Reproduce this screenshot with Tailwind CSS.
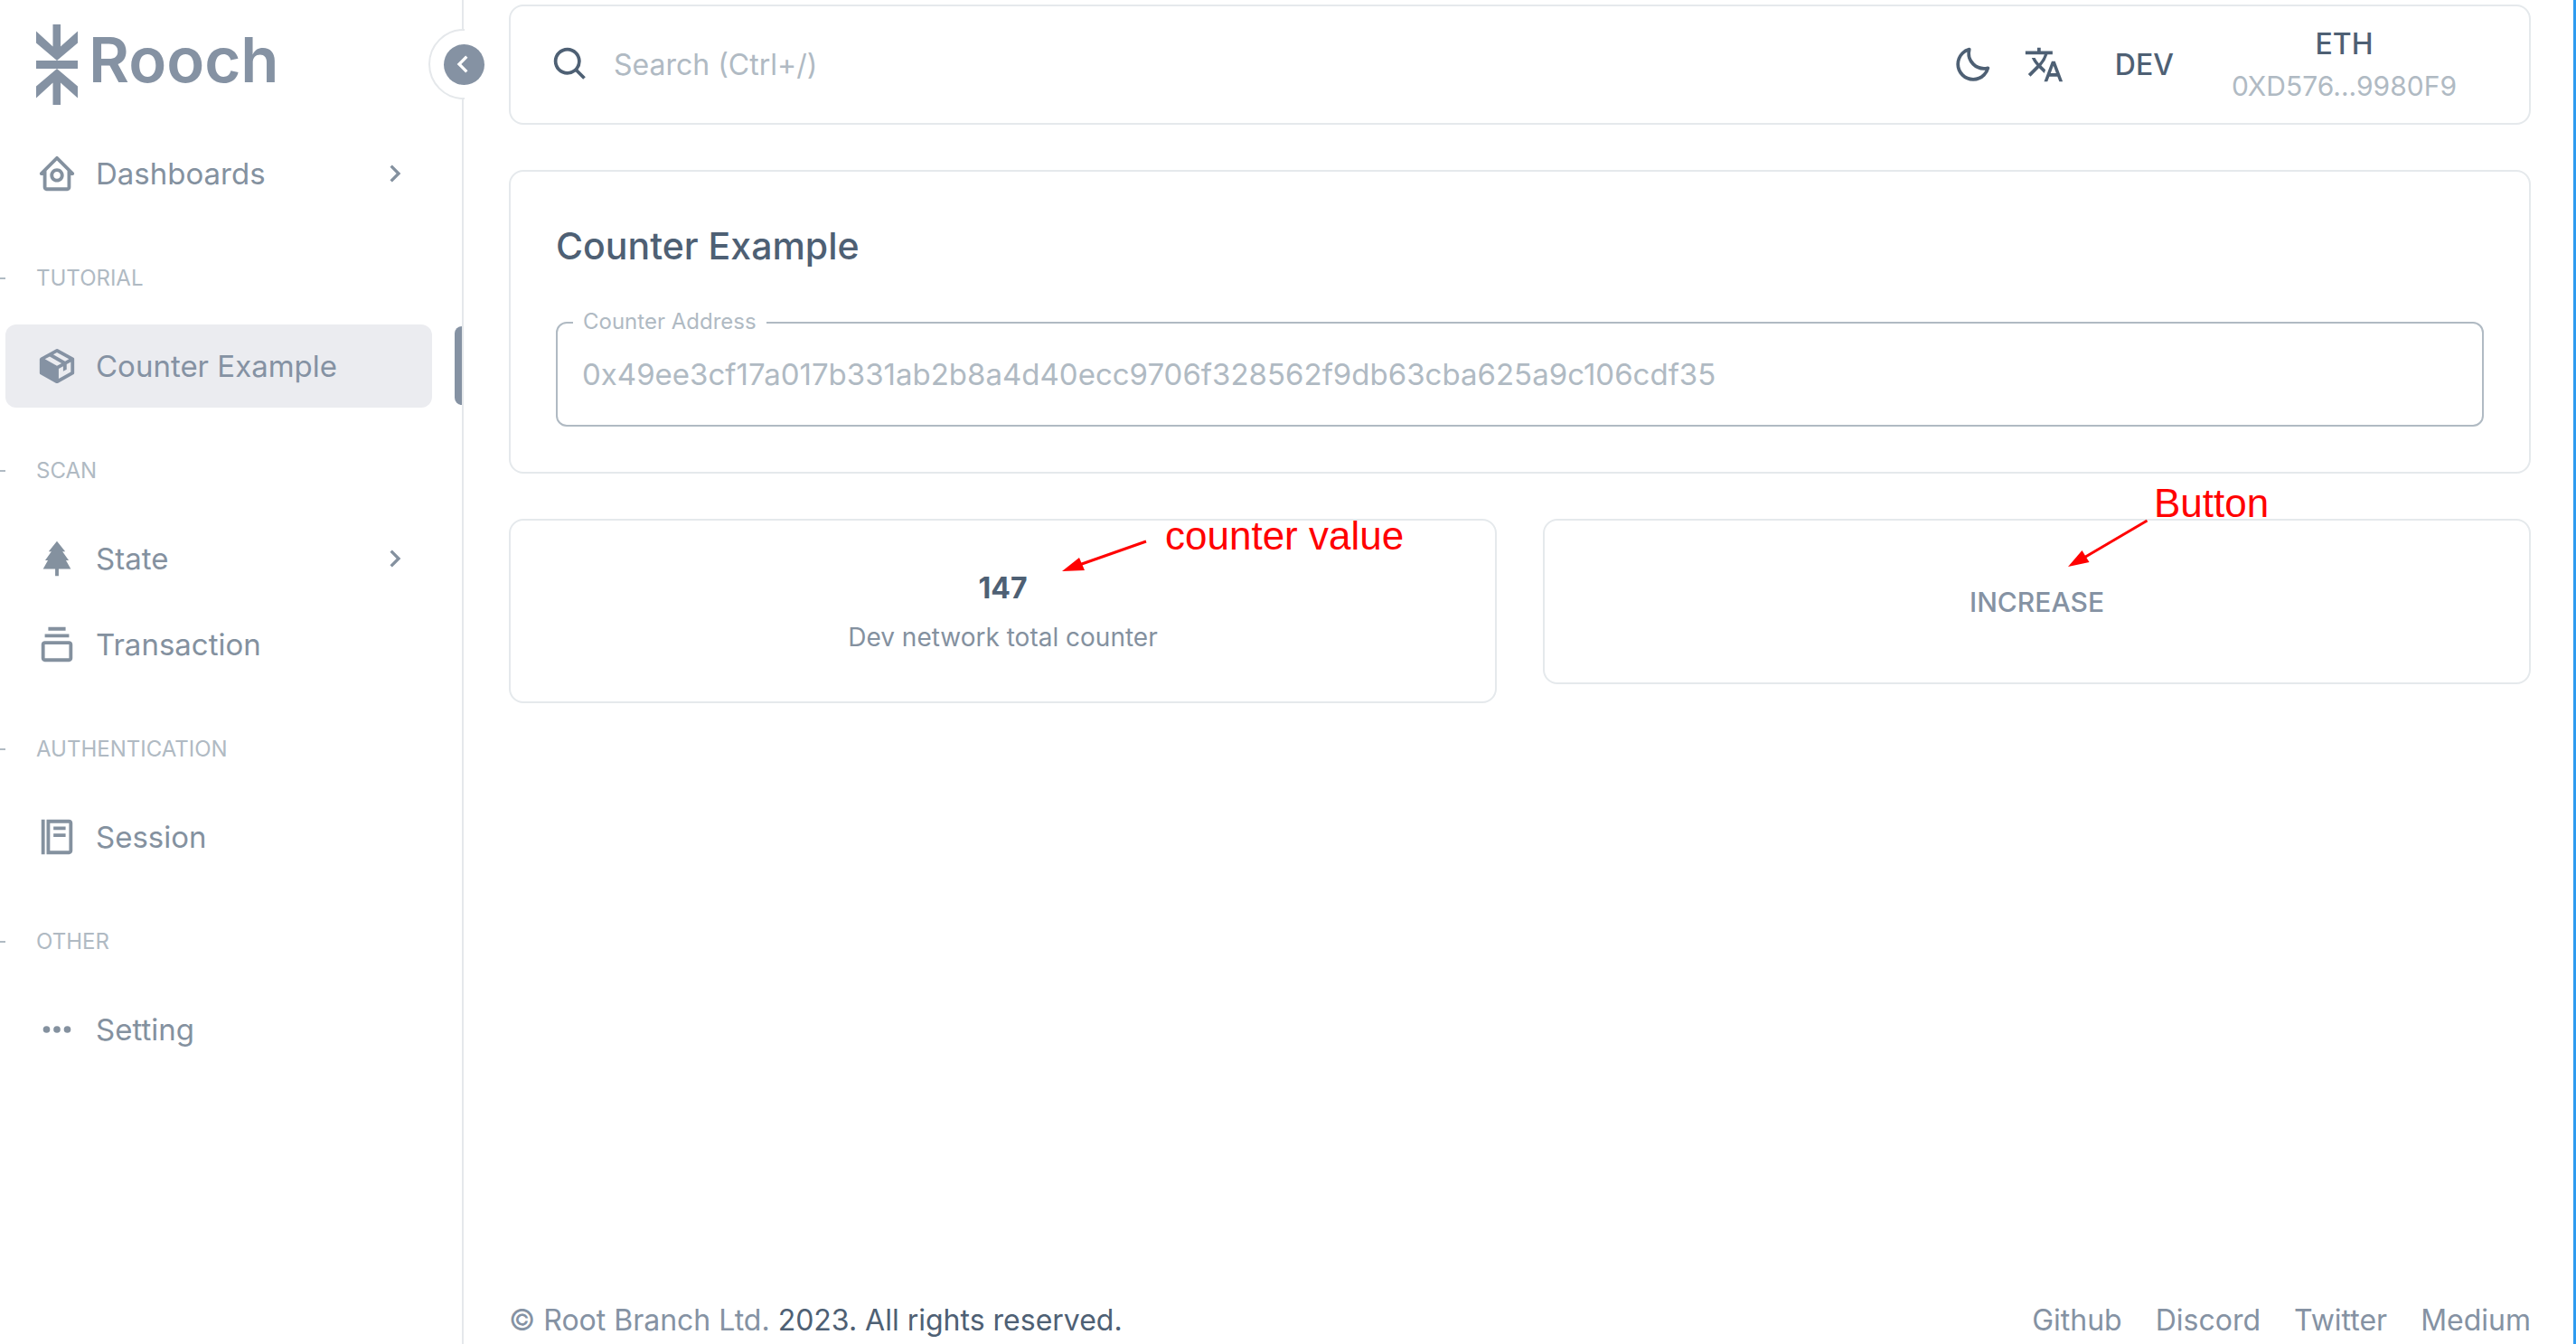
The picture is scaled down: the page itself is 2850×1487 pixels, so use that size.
<!DOCTYPE html>
<html lang="en">
<head>
<meta charset="utf-8">
<meta name="viewport" content="width=device-width, initial-scale=1">
<title>Rooch - Counter Example</title>
<script src="https://cdn.jsdelivr.net/npm/@tailwindcss/browser@4"></script>
</head>
<body class="flex min-h-screen border-r-3 border-[#2e9bf0] bg-white font-['Inter',sans-serif] text-[32px] leading-[52px] text-[#84919f]">

<!-- Sidebar -->
<aside class="relative w-[513px] shrink-0 border-r-2 border-[#e5e8eb]">
  <a href="#" class="flex h-[146px] items-start gap-3 pl-10 pt-[27px] text-[#8592a3]">
    <svg class="h-[89px] w-[46px]" viewBox="0 0 46 89" fill="currentColor" aria-hidden="true">
      <path d="M18.500 0H27V24.500L46 7.500V20.500L23 40L0 20.500V7.500L18.500 24.500Z"/>
      <path d="M0 40H46V49H0Z"/>
      <path d="M18.500 89H27V64.500L46 81.500V68.500L23 49L0 68.500V81.500L18.500 64.500Z"/>
    </svg>
    <span class="text-[69px] font-semibold leading-[78px]">Rooch</span>
  </a>

  <button type="button" aria-label="Collapse sidebar" class="absolute top-8 -right-[41px] flex h-[78px] w-[78px] items-center justify-center rounded-full bg-white">
    <svg class="absolute inset-0 h-[78px] w-[78px]" viewBox="0 0 78 78" fill="none" stroke="#e5e8eb" stroke-width="2" aria-hidden="true"><path d="M40 1H39A38 38 0 0 0 39 77H40"/></svg>
    <span class="flex h-[45px] w-[45px] items-center justify-center rounded-full bg-[#8592a3] text-white">
      <svg class="h-10 w-10" viewBox="0 0 24 24" fill="currentColor" aria-hidden="true"><path d="M13.293 6.293 7.586 12l5.707 5.707 1.414-1.414L10.414 12l4.293-4.293z"/></svg>
    </span>
  </button>

  <nav class="pl-1.5 pr-[33px] text-[33px]">
    <a href="#" class="flex h-[92px] items-center gap-5 pl-[34px] pr-[22px]">
      <svg class="size-[46px]" viewBox="0 0 24 24" fill="currentColor" aria-hidden="true"><path d="M3 13h1v7c0 1.103.897 2 2 2h12c1.103 0 2-.897 2-2v-7h1a1 1 0 0 0 .707-1.707l-9-9a.999.999 0 0 0-1.414 0l-9 9A1 1 0 0 0 3 13zm9-8.586 6 6V20H6v-9.586l6-6z"/><path d="M12 17c2.206 0 4-1.794 4-4s-1.794-4-4-4-4 1.794-4 4 1.794 4 4 4zm0-6c1.103 0 2 .897 2 2s-.897 2-2 2-2-.897-2-2 .897-2 2-2z"/></svg>
      <span class="grow">Dashboards</span>
      <svg class="size-10" viewBox="0 0 24 24" fill="currentColor" aria-hidden="true"><path d="M10.707 17.707 16.414 12l-5.707-5.707-1.414 1.414L13.586 12l-4.293 4.293z"/></svg>
    </a>

    <h2 class="-ml-1.5 mb-[25px] mt-11 flex items-center gap-[34px] text-2xl leading-[52px] text-[#b0bac3]"><span class="h-0.5 w-1.5 bg-current"></span>TUTORIAL</h2>
    <a href="#" aria-current="page" class="relative flex h-[92px] items-center gap-5 rounded-xl bg-[#ebecf0] pl-[34px] pr-[22px] text-[#8592a3]">
      <svg class="size-[46px]" viewBox="0 0 24 24" fill="currentColor" aria-hidden="true"><path d="M22 8a.76.76 0 0 0 0-.21v-.08a.77.77 0 0 0-.07-.16.35.35 0 0 0-.05-.08l-.1-.13-.08-.06-.12-.09-9-5a1 1 0 0 0-1 0l-9 5-.09.07-.11.08a.41.41 0 0 0-.07.11.39.39 0 0 0-.08.1.59.59 0 0 0-.06.14.3.3 0 0 0 0 .1A.76.76 0 0 0 2 8v8a1 1 0 0 0 .52.87l9 5a.75.75 0 0 0 .13.06h.1a1.06 1.06 0 0 0 .5 0h.1l.14-.06 9-5A1 1 0 0 0 22 16V8zm-10 3.870L5.060 8l2.760-1.520 6.830 3.900zm0-7.720L18.940 8 16.700 9.250 9.870 5.340zM13 19.300v-5.720l2.600-1.440V15l2-1v-3l2.400-1.300v5.720z"/></svg>
      <span class="grow">Counter Example</span>
      <span class="absolute -right-[33px] top-0.5 h-[87px] w-2 rounded-l-lg bg-[#8592a3]"></span>
    </a>

    <h2 class="-ml-1.5 mb-[25px] mt-11 flex items-center gap-[34px] text-2xl leading-[52px] text-[#b0bac3]"><span class="h-0.5 w-1.5 bg-current"></span>SCAN</h2>
    <a href="#" class="flex h-[92px] items-center gap-5 pl-[34px] pr-[22px]">
      <svg class="size-[46px]" viewBox="0 0 24 24" fill="currentColor" aria-hidden="true"><path d="M12 2 16.800 7.900H15.200L18.800 13H17.200L20 18H13V22H11V18H4L6.800 13H5.200L8.800 7.900H7.200Z"/></svg>
      <span class="grow">State</span>
      <svg class="size-10" viewBox="0 0 24 24" fill="currentColor" aria-hidden="true"><path d="M10.707 17.707 16.414 12l-5.707-5.707-1.414 1.414L13.586 12l-4.293 4.293z"/></svg>
    </a>
    <a href="#" class="mt-[3px] flex h-[92px] items-center gap-5 pl-[34px] pr-[22px]">
      <svg class="size-[46px]" viewBox="0 0 24 24" fill="currentColor" aria-hidden="true"><path d="M19 10H5c-1.103 0-2 .897-2 2v8c0 1.103.897 2 2 2h14c1.103 0 2-.897 2-2v-8c0-1.103-.897-2-2-2zM5 20v-8h14l.002 8H5zM5 6h14v2H5zm2-4h10v2H7z"/></svg>
      <span class="grow">Transaction</span>
    </a>

    <h2 class="-ml-1.5 mb-[25px] mt-11 flex items-center gap-[34px] text-2xl leading-[52px] text-[#b0bac3]"><span class="h-0.5 w-1.5 bg-current"></span>AUTHENTICATION</h2>
    <a href="#" class="flex h-[92px] items-center gap-5 pl-[34px] pr-[22px]">
      <svg class="size-[46px]" viewBox="0 0 24 24" fill="currentColor" aria-hidden="true"><path d="M3 2h2v20H3zm16 0H6v20h13c1.103 0 2-.897 2-2V4c0-1.103-.897-2-2-2zm0 18H8V4h11v16z"/><path d="M10 6h7v2h-7zm0 4h7v2h-7z"/></svg>
      <span class="grow">Session</span>
    </a>

    <h2 class="-ml-1.5 mb-[25px] mt-11 flex items-center gap-[34px] text-2xl leading-[52px] text-[#b0bac3]"><span class="h-0.5 w-1.5 bg-current"></span>OTHER</h2>
    <a href="#" class="flex h-[92px] items-center gap-5 pl-[34px] pr-[22px]">
      <svg class="size-[46px]" viewBox="0 0 24 24" fill="currentColor" aria-hidden="true"><circle cx="6" cy="12" r="2"/><circle cx="12" cy="12" r="2"/><circle cx="18" cy="12" r="2"/></svg>
      <span class="grow">Setting</span>
    </a>
  </nav>
</aside>

<!-- Content -->
<div class="flex min-w-0 grow flex-col pl-[50px] pr-[47px] pt-[5px]">
  <header class="flex h-[133px] items-center rounded-2xl border-2 border-[#e5e9ec] pl-11 pr-20 text-[#4e6074]">
    <label for="search" aria-label="Search"><svg class="size-[45px]" viewBox="0 0 24 24" fill="currentColor" aria-hidden="true"><path d="M10 18a7.952 7.952 0 0 0 4.897-1.688l4.396 4.396 1.414-1.414-4.396-4.396A7.952 7.952 0 0 0 18 10c0-4.411-3.589-8-8-8s-8 3.589-8 8 3.589 8 8 8zm0-14c3.309 0 6 2.691 6 6s-2.691 6-6 6-6-2.691-6-6 2.691-6 6-6z"/></svg></label>
    <input id="search" type="text" placeholder="Search (Ctrl+/)" class="ml-[25px] min-w-0 grow bg-transparent outline-none placeholder:text-[#b0bac3]">
    <button type="button" aria-label="Toggle dark mode"><svg class="size-[45px]" viewBox="0 0 24 24" fill="currentColor" aria-hidden="true"><path d="M20.742 13.045a8.088 8.088 0 0 1-2.077.271c-2.135 0-4.140-.830-5.646-2.336a8.025 8.025 0 0 1-2.064-7.723A1 1 0 0 0 9.730 2.034a10.014 10.014 0 0 0-4.489 2.582c-3.898 3.898-3.898 10.243 0 14.143a9.937 9.937 0 0 0 7.072 2.930 9.930 9.930 0 0 0 7.070-2.929 10.007 10.007 0 0 0 2.583-4.491 1.001 1.001 0 0 0-1.224-1.224zm-2.772 4.301a7.947 7.947 0 0 1-5.656 2.343 7.953 7.953 0 0 1-5.658-2.344c-3.118-3.119-3.118-8.195 0-11.314a7.923 7.923 0 0 1 2.060-1.483 10.027 10.027 0 0 0 2.890 7.848 9.972 9.972 0 0 0 7.848 2.891 8.036 8.036 0 0 1-1.484 2.059z"/></svg></button>
    <button type="button" aria-label="Change language" class="ml-[34px]"><svg class="size-[45px]" viewBox="0 0 24 24" fill="currentColor" aria-hidden="true"><path d="M12.870 15.070l-2.540-2.510.030-.030A17.520 17.520 0 0 0 14.070 6H17V4h-7V2H8v2H1v2h11.170C11.500 7.920 10.440 9.750 9 11.350 8.070 10.320 7.300 9.190 6.690 8h-2c.730 1.630 1.730 3.170 2.980 4.560l-5.090 5.020L4 19l5-5 3.110 3.110.760-2.040zM18.500 10h-2L12 22h2l1.120-3h4.750L21 22h2l-4.500-12zm-2.620 7l1.620-4.330L19.120 17h-3.240z"/></svg></button>
    <button type="button" class="ml-14 font-medium">DEV</button>
    <button type="button" class="ml-16 flex flex-col items-center">
      <span class="font-medium leading-[46px]">ETH</span>
      <span class="text-[30px] leading-[46px] text-[#b0bac3]">0XD576...9980F9</span>
    </button>
  </header>

  <main>
    <section class="mt-[50px] h-[336px] rounded-2xl border-2 border-[#e5e9ec] px-[50px] pt-[50px]">
      <h1 class="text-[41px] font-medium leading-[64px] text-[#4e6074]">Counter Example</h1>
      <div class="relative mt-[52px]">
        <label for="address" class="absolute -top-[17px] left-[19px] bg-white px-[11px] text-2xl leading-[34px] text-[#b0bac3]">Counter Address</label>
        <input id="address" type="text" disabled value="0x49ee3cf17a017b331ab2b8a4d40ecc9706f328562f9db63cba625a9c106cdf35" class="block h-[116px] w-full rounded-xl border-2 border-[#b0bac3] bg-white px-[27px] text-[33px] text-[#b0bac3]">
      </div>
    </section>

    <div class="mt-[50px] grid grid-cols-2 items-start gap-x-[51px]">
      <section class="relative flex h-[204px] flex-col items-center rounded-2xl border-2 border-[#e5e9ec] pt-[49px]">
        <p class="font-bold leading-[52px] text-[#4e6074]">147</p>
        <p class="text-[28px] leading-[56px]">Dev network total counter</p>
        <!-- callout -->
        <svg class="absolute left-[609px] top-[19px] h-10 w-24" viewBox="0 0 96 40" aria-hidden="true"><path d="M94 4 20 30" stroke="#f00" stroke-width="3" fill="none"/><path d="M1 37 20 22 26 36Z" fill="#f00"/></svg>
        <span class="absolute left-[724px] top-[-9px] font-['Liberation_Sans',sans-serif] text-[44px] leading-[52px] text-[#ff0000]">counter value</span>
      </section>
      <section class="relative h-[183px] rounded-2xl border-2 border-[#e5e9ec]">
        <button type="button" class="h-full w-full text-[30px] font-medium text-[#8592a3]">INCREASE</button>
        <!-- callout -->
        <svg class="absolute left-[578px] top-[-2px] h-[54px] w-[90px]" viewBox="0 0 90 54" aria-hidden="true"><path d="M88.500 2 17 44" stroke="#f00" stroke-width="3" fill="none"/><path d="M1 53 16.500 35 24.500 48Z" fill="#f00"/></svg>
        <span class="absolute left-[674px] top-[-45px] font-['Liberation_Sans',sans-serif] text-[44px] leading-[52px] text-[#ff0000]">Button</span>
      </section>
    </div>
  </main>

  <footer class="mt-auto flex justify-between text-[#8592a3]">
    <p>© <a href="#">Root Branch Ltd.</a> <span class="text-[#4e6074]">2023. All rights reserved.</span></p>
    <div class="flex gap-[37px]">
      <a href="#">Github</a><a href="#">Discord</a><a href="#">Twitter</a><a href="#">Medium</a>
    </div>
  </footer>
</div>
</body>
</html>
